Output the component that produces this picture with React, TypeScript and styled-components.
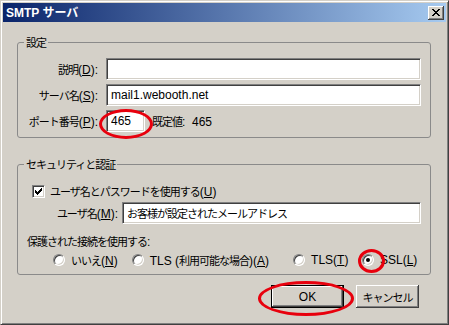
import React from 'react'
import styled, { createGlobalStyle } from 'styled-components'

const colors = {
  face: '#d4d0c8',
  shadow: '#808080',
  dark: '#404040',
  white: '#ffffff',
  frame: '#8a8a8a',
  red: '#e8000d',
  titleFrom: '#0a246a',
  titleTo: '#a6caf0'
};

const GlobalStyle = createGlobalStyle`
  html, body {
    margin: 0;
    padding: 0;
    background: ${colors.face};
  }
  body {
    font-family: "Liberation Sans", "Noto Sans CJK JP", sans-serif;
    font-size: 12px;
    color: #000;
  }
`;

// Japanese runs: narrower advance, close to the bitmap UI font
const Jp = styled.span`
  font-family: "Noto Sans CJK JP", sans-serif;
  font-size: 11px;
  letter-spacing: -1px;
`;

const Window = styled.div`
  position: relative;
  width: 449px;
  height: 325px;
  box-sizing: border-box;
  background: ${colors.face};
  border: 1px solid;
  border-color: ${colors.face} ${colors.dark} ${colors.dark} ${colors.face};
  box-shadow: inset 1px 1px ${colors.white}, inset -1px -1px ${colors.shadow};
  padding: 2px;
  display: flex;
  flex-direction: column;
`;

const TitleBar = styled.div`
  height: 19px;
  display: flex;
  align-items: center;
  justify-content: space-between;
  padding: 0 2px 0 3px;
  background: linear-gradient(to right, ${colors.titleFrom}, ${colors.titleTo});
`;

const Title = styled.span`
  color: ${colors.white};
  font-weight: bold;
  font-size: 12px;
  line-height: 14px;
`;

const CloseButton = styled.div`
  width: 16px;
  height: 14px;
  display: flex;
  align-items: center;
  justify-content: center;
  background: ${colors.face};
  box-shadow: inset -1px -1px ${colors.dark}, inset 1px 1px ${colors.white},
    inset -2px -2px ${colors.shadow};
`;

const Body = styled.div`
  padding: 0 15px 0 14px;
  display: flex;
  flex-direction: column;
`;

const Group = styled.fieldset<{ $top: number }>`
  margin: ${p => p.$top}px 0 0 0;
  padding: 0;
  border: 1px solid ${colors.frame};
  border-radius: 3px;
  min-inline-size: 0;
`;

const Legend = styled.legend`
  margin-left: 6px;
  padding: 0 2px;
  line-height: 14px;
`;

const FormGrid = styled.div`
  display: grid;
  grid-template-columns: 80px 1fr;
  column-gap: 8px;
  row-gap: 4px;
  padding: 8px 9px 5px 0;
  align-items: center;
`;

const Label = styled.label`
  text-align: right;
  white-space: nowrap;
`;

const TextBox = styled.input<{ $width?: number; $jp?: boolean }>`
  box-sizing: border-box;
  height: 22px;
  width: ${p => (p.$width ? `${p.$width}px` : '100%')};
  margin: 0;
  padding: 0 4px;
  font-family: ${p => (p.$jp ? '"Noto Sans CJK JP", sans-serif' : '"Liberation Sans", sans-serif')};
  font-size: ${p => (p.$jp ? '11px' : '12px')};
  letter-spacing: ${p => (p.$jp ? '-1px' : 'normal')};
  color: #000;
  background: ${colors.white};
  border: 1px solid;
  border-color: ${colors.shadow} ${colors.white} ${colors.white} ${colors.shadow};
  box-shadow: inset 1px 1px ${colors.dark}, inset -1px -1px ${colors.face};
  outline: none;
`;

const PortRow = styled.div`
  display: flex;
  align-items: center;
  gap: 7px;
`;

const SecurityBody = styled.div`
  display: flex;
  flex-direction: column;
  padding: 11px 9px 7px 0;
`;

const CheckRow = styled.div`
  display: flex;
  align-items: center;
  gap: 5px;
  height: 16px;
  padding-left: 14px;
`;

const Box = styled.span`
  box-sizing: border-box;
  width: 13px;
  height: 13px;
  display: flex;
  align-items: center;
  justify-content: center;
  background: ${colors.white};
  border: 1px solid;
  border-color: ${colors.shadow} ${colors.white} ${colors.white} ${colors.shadow};
  box-shadow: inset 1px 1px ${colors.dark}, inset -1px -1px ${colors.face};
`;

const UserRow = styled.div`
  display: flex;
  align-items: center;
  gap: 4px;
  margin-top: 3px;
`;

const UserLabel = styled.label`
  width: 100px;
  flex: none;
  text-align: right;
  white-space: nowrap;
`;

const Caption = styled.div`
  line-height: 14px;
  margin-top: 10px;
  padding-left: 9px;
`;

const RadioRow = styled.div`
  display: flex;
  align-items: center;
  height: 14px;
  margin-top: 4px;
  padding-left: 35px;
`;

const Option = styled.div<{ $width: number }>`
  display: flex;
  align-items: center;
  gap: 6px;
  width: ${p => p.$width}px;
  white-space: nowrap;
`;

const Radio = styled.span<{ $checked?: boolean }>`
  box-sizing: border-box;
  width: 12px;
  height: 12px;
  flex: none;
  border-radius: 50%;
  display: flex;
  align-items: center;
  justify-content: center;
  background: ${colors.white};
  border: 1px solid;
  border-color: ${colors.shadow} ${colors.white} ${colors.white} ${colors.shadow};
  box-shadow: inset 1px 1px ${colors.dark}, inset -1px -1px ${colors.face};
  &::after {
    content: '';
    width: 4px;
    height: 4px;
    border-radius: 50%;
    background: ${p => (p.$checked ? '#000' : 'transparent')};
  }
`;

const ButtonRow = styled.div`
  display: flex;
  justify-content: flex-end;
  gap: 12px;
  margin-top: 10px;
  padding-right: 12px;
`;

const Button = styled.div<{ $default?: boolean; $width: number }>`
  box-sizing: border-box;
  width: ${p => p.$width}px;
  height: 23px;
  display: flex;
  align-items: center;
  justify-content: center;
  background: ${colors.face};
  border: ${p => (p.$default ? '1px solid #000' : 'none')};
  box-shadow: inset -1px -1px ${colors.dark}, inset 1px 1px ${colors.white},
    inset -2px -2px ${colors.shadow};
`;

const Mark = styled.div<{ $x: number; $y: number; $w: number; $h: number }>`
  position: absolute;
  left: ${p => p.$x}px;
  top: ${p => p.$y}px;
  width: ${p => p.$w}px;
  height: ${p => p.$h}px;
  box-sizing: border-box;
  border: 3px solid ${colors.red};
  border-radius: 50%;
  pointer-events: none;
`;

const CloseIcon = () => (
  <svg width="8" height="7" viewBox="0 0 8 7" shapeRendering="crispEdges">
    <path d="M0 0h2v1h1v1h2v-1h1v-1h2v1h-1v1h-1v1h-1v1h1v1h1v1h1v1h-2v-1h-1v-1h-2v1h-1v1h-2v-1h1v-1h1v-1h1v-1h-1v-1h-1v-1h-1z" fill="#000" />
  </svg>
);

const CheckIcon = () => (
  <svg width="7" height="7" viewBox="0 0 7 7" shapeRendering="crispEdges">
    <path d="M6 0h1v3h-1v1h-1v1h-1v1h-1v1h-1v-1h-1v-1h-1v-3h1v1h1v1h1v-1h1v-1h1v-1h1z" fill="#000" />
  </svg>
);

const App: React.FC = () => (
  <>
    <GlobalStyle />
    <Window>
      <TitleBar>
        <Title>SMTP サーバ</Title>
        <CloseButton>
          <CloseIcon />
        </CloseButton>
      </TitleBar>
      <Body>
        <Group $top={13}>
          <Legend><Jp>設定</Jp></Legend>
          <FormGrid>
            <Label><Jp>説明</Jp>(<u>D</u>):</Label>
            <TextBox readOnly value="" />
            <Label><Jp>サーバ名</Jp>(<u>S</u>):</Label>
            <TextBox readOnly value="mail1.webooth.net" />
            <Label><Jp>ポート番号</Jp>(<u>P</u>):</Label>
            <PortRow>
              <TextBox readOnly value="465" $width={39} />
              <span><Jp>既定値</Jp>:&nbsp;&nbsp;465</span>
            </PortRow>
          </FormGrid>
        </Group>
        <Group $top={19}>
          <Legend><Jp>セキュリティと認証</Jp></Legend>
          <SecurityBody>
            <CheckRow>
              <Box>
                <CheckIcon />
              </Box>
              <span><Jp>ユーザ名とパスワードを使用する</Jp>(<u>U</u>)</span>
            </CheckRow>
            <UserRow>
              <UserLabel><Jp>ユーザ名</Jp>(<u>M</u>):</UserLabel>
              <TextBox readOnly value="お客様が設定されたメールアドレス" $jp />
            </UserRow>
            <Caption><Jp>保護された接続を使用する</Jp>:</Caption>
            <RadioRow>
              <Option $width={80}>
                <Radio />
                <span><Jp>いいえ</Jp>(<u>N</u>)</span>
              </Option>
              <Option $width={164}>
                <Radio />
                <span>TLS (<Jp>利用可能な場合</Jp>)(<u>A</u>)</span>
              </Option>
              <Option $width={70}>
                <Radio />
                <span>TLS(<u>T</u>)</span>
              </Option>
              <Option $width={60}>
                <Radio $checked />
                <span>SSL(<u>L</u>)</span>
              </Option>
            </RadioRow>
          </SecurityBody>
        </Group>
        <ButtonRow>
          <Button $default $width={73}>OK</Button>
          <Button $width={63}><Jp>キャンセル</Jp></Button>
        </ButtonRow>
      </Body>
      <Mark $x={98} $y={108} $w={54} $h={30} />
      <Mark $x={357} $y={248} $w={27} $h={24} />
      <Mark $x={257} $y={280} $w={96} $h={35} />
    </Window>
  </>
);

export default App
